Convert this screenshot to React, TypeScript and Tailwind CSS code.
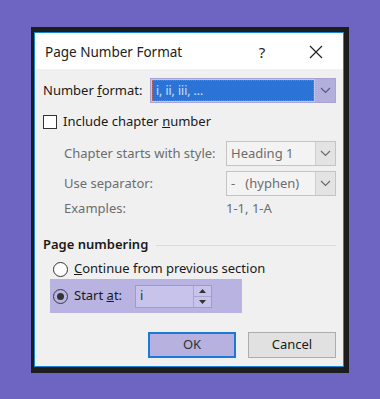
import React from 'react'

const font = { fontFamily: '"Noto Sans", "Open Sans", sans-serif' }

function Chevron({ color = '#555' }: { color?: string }) {
    return (
        <svg width="11" height="7" viewBox="0 0 11 7">
            <polyline points="1,1 5.5,5.5 10,1" fill="none" stroke={color} strokeWidth="1.2" />
        </svg>
    )
}

export default function App() {
    return (
        <div className="w-[380px] h-[399px] bg-[#6e64c2] pl-[31px] pt-[27px]" style={font}>
            {/* dark frame */}
            <div className="w-[318px] h-[346px] bg-[#1d1d1d] pt-[5px] pl-[3px] pr-[5px] pb-[6px]">
                <div className="h-full border border-[#1a86d9] bg-[#f0f0f0] flex flex-col text-[13px] text-[#1a1a1a]">
                    {/* title bar */}
                    <div className="h-[36px] bg-white flex items-center pl-[10px] pt-[2px] shrink-0">
                        <span className="text-[13.5px] text-[#222]">Page Number Format</span>
                        <span className="ml-auto w-[14px] text-center text-[15px] text-[#222]">?</span>
                        <span className="ml-[40px] mr-[20px] flex items-center">
                            <svg width="14" height="14" viewBox="0 0 14 14">
                                <path d="M1 1 L13 13 M13 1 L1 13" stroke="#222" strokeWidth="1.2" />
                            </svg>
                        </span>
                    </div>

                    <div className="flex flex-col pl-[8px] pr-[7px]">
                        {/* Number format */}
                        <div className="mt-[9px] h-[25px] flex items-center">
                            <span className="w-[107px]">Number <u>f</u>ormat:</span>
                            <div className="flex-1 h-[25px] border border-[#a9a4d4] bg-[#c5c1e9] flex items-stretch">
                                <div className="flex-1 m-[1px] bg-[#2b74d6] border border-dotted border-[#b86b6b] flex items-center pl-[3px] text-[#cfe0ff] text-[12px]">
                                    i, ii, iii, ...
                                </div>
                                <div className="w-[20px] bg-[#b3afdc] flex items-center justify-center">
                                    <Chevron color="#5a5a7a" />
                                </div>
                            </div>
                        </div>

                        {/* Include chapter number */}
                        <div className="mt-[11px] h-[16px] flex items-center">
                            <div className="w-[14px] h-[14px] border border-[#333] bg-white" />
                            <span className="ml-[6px]">Include chapter <u>n</u>umber</span>
                        </div>

                        {/* Chapter starts with style */}
                        <div className="mt-[11px] h-[25px] flex items-center text-[#6d6d6d]">
                            <span className="ml-[21px] w-[162px]">Chapter starts with style:</span>
                            <div className="flex-1 h-[25px] border border-[#c4c4c4] bg-[#f3f3f3] flex items-stretch">
                                <div className="flex-1 flex items-center pl-[4px]">Heading 1</div>
                                <div className="w-[20px] bg-[#e3e3e3] border-l border-[#cfcfcf] flex items-center justify-center">
                                    <Chevron color="#6a6a6a" />
                                </div>
                            </div>
                        </div>

                        {/* Use separator */}
                        <div className="mt-[5px] h-[25px] flex items-center text-[#6d6d6d]">
                            <span className="ml-[21px] w-[162px]">Use separator:</span>
                            <div className="flex-1 h-[25px] border border-[#c4c4c4] bg-[#f3f3f3] flex items-stretch">
                                <div className="flex-1 flex items-center pl-[4px] whitespace-pre">-   (hyphen)</div>
                                <div className="w-[20px] bg-[#e3e3e3] border-l border-[#cfcfcf] flex items-center justify-center">
                                    <Chevron color="#6a6a6a" />
                                </div>
                            </div>
                        </div>

                        {/* Examples */}
                        <div className="mt-[5px] h-[16px] flex items-center text-[#6d6d6d]">
                            <span className="ml-[21px] w-[162px]">Examples:</span>
                            <span>1-1, 1-A</span>
                        </div>

                        {/* Page numbering */}
                        <div className="mt-[20px] h-[16px] flex items-center">
                            <span className="font-semibold text-[#1a1a1a]">Page numbering</span>
                            <div className="flex-1 ml-[8px] h-px bg-[#dadada]" />
                        </div>

                        {/* Continue */}
                        <div className="mt-[8px] h-[16px] flex items-center">
                            <div className="ml-[10px] w-[15px] h-[15px] rounded-full border border-[#333] bg-white" />
                            <span className="ml-[6px]"><u>C</u>ontinue from previous section</span>
                        </div>

                        {/* Start at (highlighted) */}
                        <div className="mt-[2px] ml-[7px] w-[192px] h-[34px] bg-[#b8b3e1] flex items-center">
                            <div className="ml-[3px] w-[15px] h-[15px] rounded-full border border-[#3a3a4a] flex items-center justify-center">
                                <div className="w-[7px] h-[7px] rounded-full bg-[#333]" />
                            </div>
                            <span className="ml-[6px] w-[61px]">Start <u>a</u>t:</span>
                            <div className="w-[77px] h-[23px] border border-[#9f9ac8] bg-[#c7c3ea] flex items-stretch">
                                <div className="flex-1 flex items-center pl-[4px] text-[#333]">i</div>
                                <div className="w-[18px] flex flex-col border-l border-[#a9a4d1]">
                                    <div className="flex-1 flex items-center justify-center border-b border-[#a9a4d1]">
                                        <svg width="7" height="4" viewBox="0 0 7 4"><polygon points="0,4 3.5,0 7,4" fill="#333" /></svg>
                                    </div>
                                    <div className="flex-1 flex items-center justify-center">
                                        <svg width="7" height="4" viewBox="0 0 7 4"><polygon points="0,0 3.5,4 7,0" fill="#333" /></svg>
                                    </div>
                                </div>
                            </div>
                        </div>

                        {/* buttons */}
                        <div className="mt-[19px] flex justify-end gap-[12px]">
                            <button className="w-[88px] h-[26px] border-2 border-[#1a7ad6] bg-[#b6b1df] text-[#333]">OK</button>
                            <button className="w-[88px] h-[26px] border border-[#adadad] bg-[#e1e1e1] text-[#1a1a1a]">Cancel</button>
                        </div>
                    </div>
                </div>
            </div>
        </div>
    )
}
